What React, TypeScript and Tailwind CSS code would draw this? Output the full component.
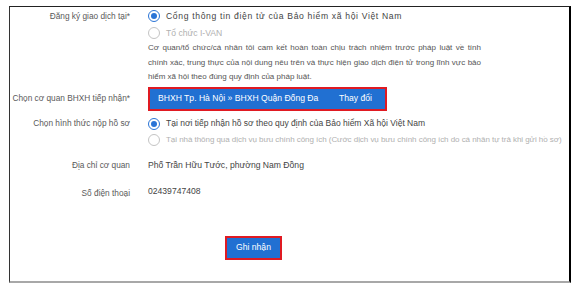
import React from "react";

function Radio({ checked }: { checked?: boolean }) {
  return checked ? (
    <span className="flex h-[12px] w-[12px] shrink-0 items-center justify-center rounded-full border-[1.5px] border-[#2a74d6] bg-white">
      <span className="h-[6px] w-[6px] rounded-full bg-[#2a74d6]" />
    </span>
  ) : (
    <span className="h-[12px] w-[12px] shrink-0 rounded-full border border-[#c4c4c4] bg-white" />
  );
}

function Row({
  label,
  className,
  children,
}: {
  label?: string;
  className?: string;
  children?: React.ReactNode;
}) {
  return (
    <div className={"flex " + (className ?? "")}>
      <div className="w-[118px] shrink-0 whitespace-nowrap text-right text-[8.3px] text-[#5a5a5a]">
        {label}
      </div>
      <div className="ml-[18px] min-w-0 flex-1">{children}</div>
    </div>
  );
}

export default function App() {
  return (
    <div className="h-[286px] w-[576px] bg-white pl-[9px] pt-[6px] font-['Liberation_Sans',Arial,sans-serif] text-[8.6px] text-[#444]">
      <div className="h-[277px] w-[562px] overflow-hidden border-t border-l border-r-2 border-b-2 border-t-[#222] border-l-[#333] border-r-black border-b-[#a8a8a8] pl-[2px] pt-[1px]">
        <Row label="Đăng ký giao dịch tại*" className="h-[17px] items-center">
          <div className="flex items-center gap-[6px] whitespace-nowrap">
            <Radio checked />
            <span className="tracking-[0.65px]">Cổng thông tin điện tử của Bảo hiểm xã hội Việt Nam</span>
          </div>
        </Row>
        <Row className="h-[16px] items-center">
          <div className="flex items-center gap-[6px] whitespace-nowrap text-[#b0b0b0]">
            <Radio />
            <span>Tổ chức I-VAN</span>
          </div>
        </Row>
        <Row>
          <p className="w-[333px] text-justify text-[8px] leading-[14.5px] text-[#555]">
            Cơ quan/tổ chức/cá nhân tôi cam kết hoàn toàn chịu trách nhiệm trước pháp luật về tính
            chính xác, trung thực của nội dung nêu trên và thực hiện giao dịch điện tử trong lĩnh vực bảo
            hiểm xã hội theo đúng quy định của pháp luật.
          </p>
        </Row>
        <Row label="Chọn cơ quan BHXH tiếp nhận*" className="mt-[2px] h-[24px] items-center">
          <div className="flex h-[24px] w-[239px] items-center justify-between border-2 border-[#e01a22] bg-[#2170d2] pl-[8px] pr-[13px] text-[8.6px] text-white">
            <span className="whitespace-nowrap">BHXH Tp. Hà Nội » BHXH Quận Đống Đa</span>
            <span className="whitespace-nowrap">Thay đổi</span>
          </div>
        </Row>
        <Row label="Chọn hình thức nộp hồ sơ" className="mt-[5px] h-[16px] items-center">
          <div className="flex items-center gap-[6px] whitespace-nowrap text-[8.5px]">
            <Radio checked />
            <span>Tại nơi tiếp nhận hồ sơ theo quy định của Bảo hiểm Xã hội Việt Nam</span>
          </div>
        </Row>
        <Row className="h-[16px] items-center">
          <div className="flex items-center gap-[6px] whitespace-nowrap text-[8px] text-[#b0b0b0]">
            <Radio />
            <span className="tracking-[-0.05px]">
              Tại nhà thông qua dịch vụ bưu chính công ích (Cước dịch vụ bưu chính công ích do cá nhân tự trả khi gửi hồ sơ)
            </span>
          </div>
        </Row>
        <Row label="Địa chỉ cơ quan" className="mt-[10px] h-[16px] items-center">
          <span className="whitespace-nowrap">Phố Trần Hữu Tước, phường Nam Đồng</span>
        </Row>
        <Row label="Số điện thoại" className="mt-[12px] h-[16px] items-center">
          <span className="relative -top-[2px]">02439747408</span>
        </Row>
        <Row className="mt-[34px]">
          <button className="ml-[77px] flex h-[24px] w-[57px] items-center justify-center border-2 border-[#e01a22] bg-[#2170d2] text-[8.6px] text-white">
            Ghi nhận
          </button>
        </Row>
      </div>
    </div>
  );
}
